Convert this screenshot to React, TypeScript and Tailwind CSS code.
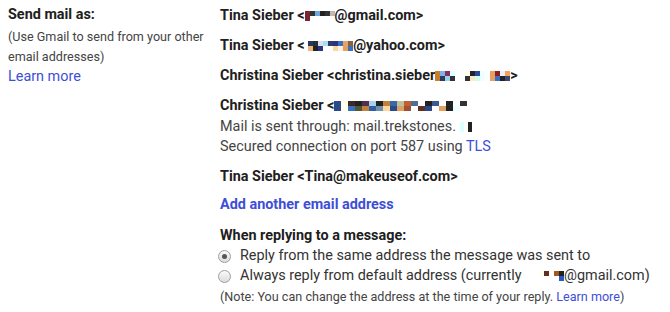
import React from "react";

// pixelated (blurred) bits of the addresses
type Cell = string | null;

function Pix({ top, bottom = [], w = 5 }: { top: Cell[]; bottom?: Cell[]; w?: number }) {
  const cols = Math.max(top.length, bottom.length);
  return (
    <span className="inline-block h-[10px] align-middle leading-none">
      {[top, bottom].map((row, r) => (
        <span key={r} className="flex h-[5px]">
          {Array.from({ length: cols }).map((_, i) => (
            <span key={i} style={{ width: w, background: row[i] ?? "transparent" }} />
          ))}
        </span>
      ))}
    </span>
  );
}

const link = "text-[#3d4fd6]";

function Radio({ checked }: { checked?: boolean }) {
  return (
    <span className="-ml-[2px] flex h-[13px] w-[13px] shrink-0 items-center justify-center rounded-full border border-[#9e9e9e] bg-gradient-to-b from-[#fafafa] to-[#dcdcdc]">
      {checked && <span className="h-[5px] w-[5px] rounded-full bg-[#555]" />}
    </span>
  );
}

export default function App() {
  return (
    <div
      className="flex h-[312px] w-[670px] overflow-hidden bg-white text-[#202020]"
      style={{ fontFamily: "Roboto, Arial, sans-serif" }}
    >
      <div className="w-[220px] shrink-0 pl-2 pt-[5px]">
        <div className="text-[14.4px] font-bold leading-5">Send mail as:</div>
        <div className="mt-[2px] text-[12.6px] leading-5 text-[#444]">
          (Use Gmail to send from your other email addresses)
        </div>
        <a className={`block text-[14.4px] leading-5 ${link}`}>Learn more</a>
      </div>

      <div className="flex-1 pt-[6px] text-[14.4px]">
        <div className="h-5 font-bold leading-5">
          Tina Sieber &lt;
          <Pix top={["#7a2630", "#333", "#6fa8dc", "#222", "#333", "#bbb"]} bottom={["#7a2630"]} />
          @gmail.com&gt;
        </div>
        <div className="mt-[10px] h-5 font-bold leading-5">
          Tina Sieber &lt;{" "}
          <Pix
            top={["#2a3560", "#233", "#dde", "#a8dcef", "#2e3e6a", "#2a3580", "#3b6fc0", "#e3a56a", "#8a6040"]}
            bottom={["#f3b47a", "#222", "#2a3580", null, null, "#f8d8a8", "#fff0e0", "#e8a060", "#3a70c0"]}
          />
          @yahoo.com&gt;
        </div>
        <div className="mt-[10px] h-5 font-bold leading-5">
          Christina Sieber &lt;christina.sieber
          <Pix
            top={["#c87c2c", "#7cb4e4", "#8a2c60", "#dff", null, null, "#ffe", "#222", "#2a4a9a", "#eff", null, "#e8a060", "#8a2020", "#eef", "#f0a060"]}
            bottom={["#c87c2c", "#2a3a60", "#9ad0f0", "#333", null, null, "#333", "#ffe8c8", "#cfe", "#eff", null, "#e8a060", "#3a70c0", "#222", "#3a4a70"]}
          />
          &gt;
        </div>
        <div className="mt-[10px] leading-5">
          <div className="h-5 font-bold">
            Christina Sieber &lt;
            <Pix
              top={["#2a4a8a", "#ffe", "#3a2a2a", "#222", "#503050", "#a8d0f0", "#222", "#c08040", "#3a6aa0", "#c0c0a0", "#c06030", "#507090", "#fff", "#222", "#3a5a90", "#fff", "#222", null, "#333"]}
              bottom={["#2a4a8a", "#ffe", "#3a70c0", "#553", "#c08040", "#3060a0", "#7090b0", "#ffd8a0", "#2a4a8a", "#e0a060", "#a05030", "#fff", "#603020", "#2a4a8a", "#fff", "#e0a060", "#222", "#eff"]}
              w={7}
            />
          </div>
          <div className="mt-[1px] h-5 text-[#444]">
            Mail is sent through: mail.trekstones.
            <Pix top={[null, "#dff", null, "#222"]} bottom={[null, "#dff", null, "#222"]} w={4} />
          </div>
          <div className="h-5 text-[#444]">
            Secured connection on port 587 using <a className={link}>TLS</a>
          </div>
        </div>
        <div className="mt-[10px] h-5 font-bold leading-5">Tina Sieber &lt;Tina@makeuseof.com&gt;</div>
        <a className={`mt-[8px] block h-5 font-bold leading-5 ${link}`}>Add another email address</a>

        <div className="mt-[11px] h-5 font-bold leading-5">When replying to a message:</div>
        <div className="flex h-5 items-center gap-[9px] leading-5 text-[#333]">
          <Radio checked />
          Reply from the same address the message was sent to
        </div>
        <div className="flex h-5 items-center gap-[9px] whitespace-nowrap leading-5 text-[#333]">
          <Radio />
          <span>
            Always reply from default address (currently{" "}
            <span className="ml-[14px]">
              <Pix top={["#ffe", "#603020", null, "#a05a20", "#222"]} bottom={[null, null, null, null, "#2a5ac0"]} />
            </span>
            @gmail.com)
          </span>
        </div>
        <div className="mt-[1px] h-5 whitespace-nowrap text-[12.6px] leading-5 text-[#444]">
          (Note: You can change the address at the time of your reply. <a className={link}>Learn more</a>)
        </div>
      </div>
    </div>
  );
}
